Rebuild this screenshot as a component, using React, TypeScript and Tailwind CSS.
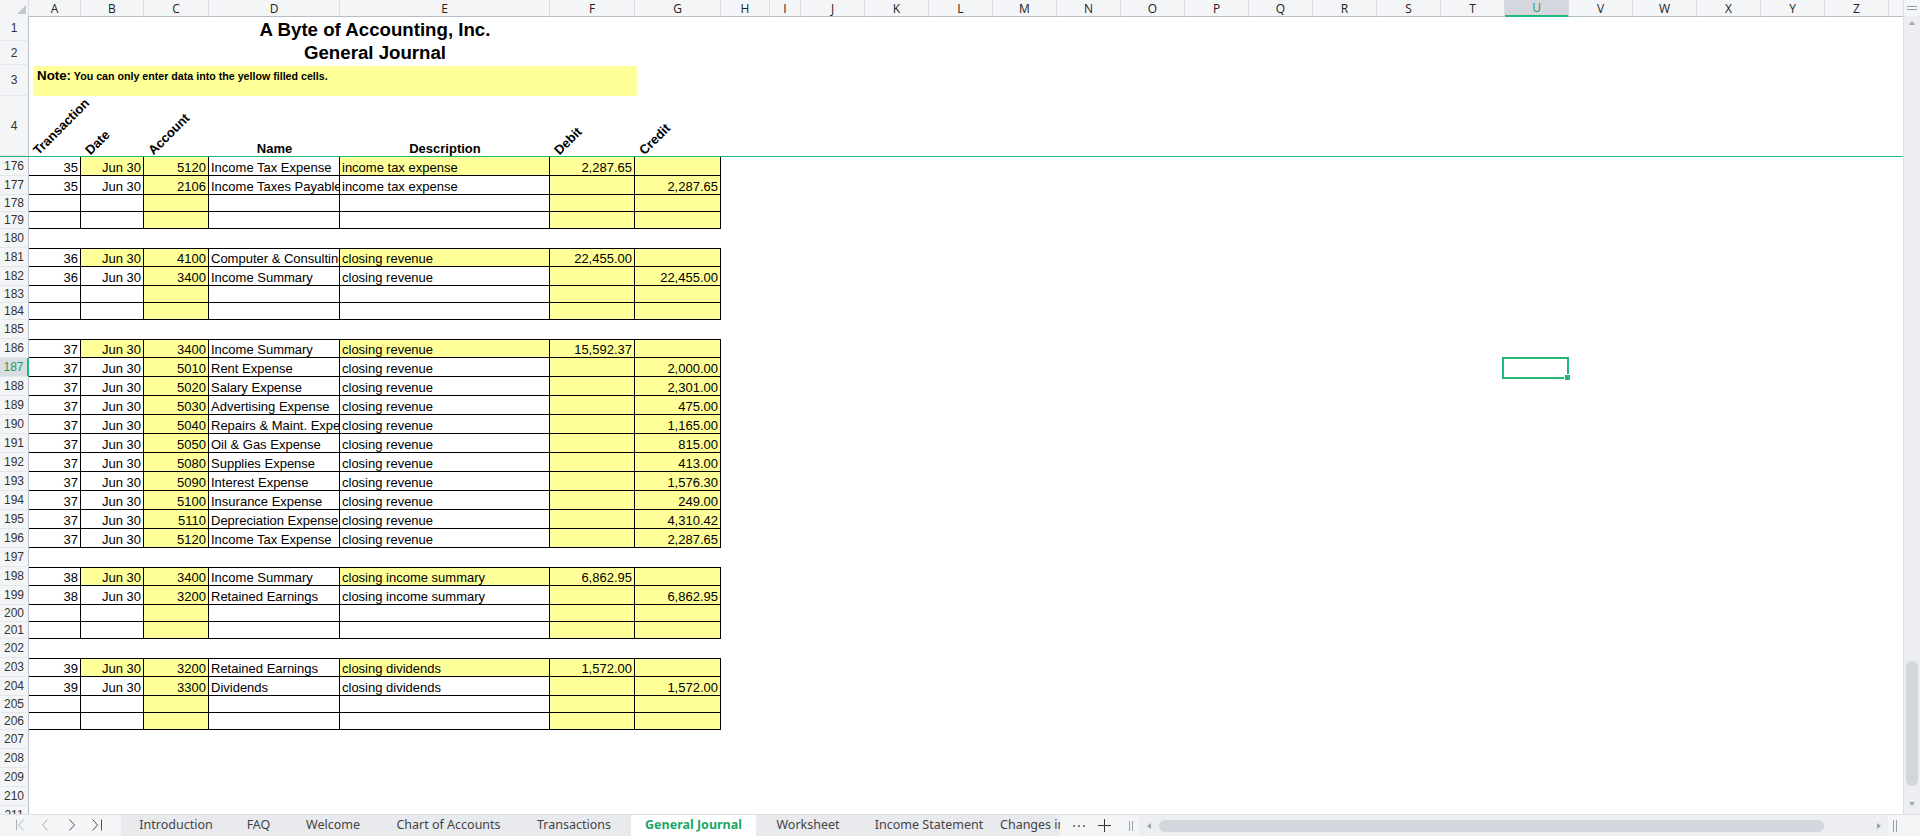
import React from 'react';

const GRID =
  'grid grid-cols-[29px_52px_63px_65px_131px_210px_85px_86px_49px_31px_repeat(17,64px)_1fr]';

const LETTERS = 'ABCDEFGHIJKLMNOPQRSTUVWXYZ'.split('');

// account, name, description, debit, credit
type Line = [string, string, string, string, string];

const BLOCKS: { t: string; lines: Line[]; empty: number }[] = [
  {
    t: '35',
    lines: [
      ['5120', 'Income Tax Expense', 'income tax expense', '2,287.65', ''],
      ['2106', 'Income Taxes Payable', 'income tax expense', '', '2,287.65'],
    ],
    empty: 2,
  },
  {
    t: '36',
    lines: [
      ['4100', 'Computer & Consulting Revenue', 'closing revenue', '22,455.00', ''],
      ['3400', 'Income Summary', 'closing revenue', '', '22,455.00'],
    ],
    empty: 2,
  },
  {
    t: '37',
    lines: [
      ['3400', 'Income Summary', 'closing revenue', '15,592.37', ''],
      ['5010', 'Rent Expense', 'closing revenue', '', '2,000.00'],
      ['5020', 'Salary Expense', 'closing revenue', '', '2,301.00'],
      ['5030', 'Advertising Expense', 'closing revenue', '', '475.00'],
      ['5040', 'Repairs & Maint. Expense', 'closing revenue', '', '1,165.00'],
      ['5050', 'Oil & Gas Expense', 'closing revenue', '', '815.00'],
      ['5080', 'Supplies Expense', 'closing revenue', '', '413.00'],
      ['5090', 'Interest Expense', 'closing revenue', '', '1,576.30'],
      ['5100', 'Insurance Expense', 'closing revenue', '', '249.00'],
      ['5110', 'Depreciation Expense', 'closing revenue', '', '4,310.42'],
      ['5120', 'Income Tax Expense', 'closing revenue', '', '2,287.65'],
    ],
    empty: 0,
  },
  {
    t: '38',
    lines: [
      ['3400', 'Income Summary', 'closing income summary', '6,862.95', ''],
      ['3200', 'Retained Earnings', 'closing income summary', '', '6,862.95'],
    ],
    empty: 2,
  },
  {
    t: '39',
    lines: [
      ['3200', 'Retained Earnings', 'closing dividends', '1,572.00', ''],
      ['3300', 'Dividends', 'closing dividends', '', '1,572.00'],
    ],
    empty: 2,
  },
];

type Row =
  | { n: number; kind: 'gap' }
  | { n: number; kind: 'line'; first: boolean; top: boolean; cells: string[] }
  | { n: number; kind: 'empty' };

function buildRows(): Row[] {
  const rows: Row[] = [];
  let n = 176;
  BLOCKS.forEach((b, bi) => {
    if (bi > 0) rows.push({ n: n++, kind: 'gap' });
    b.lines.forEach((l, li) => {
      rows.push({
        n: n++,
        kind: 'line',
        first: li === 0,
        top: bi > 0 && li === 0,
        cells: [b.t, 'Jun 30', l[0], l[1], l[2], l[3], l[4]],
      });
    });
    for (let i = 0; i < b.empty; i++) rows.push({ n: n++, kind: 'empty' });
  });
  while (n <= 211) rows.push({ n: n++, kind: 'gap' });
  return rows;
}

const RIGHT = [true, true, true, false, false, true, true];

function RowHead({ n, sel }: { n: number; sel?: boolean }) {
  return (
    <div
      className={
        sel
          ? 'flex items-center justify-center border-b border-r-2 border-b-[#e3e6ea] border-r-[#21b877] bg-[#dadde2] text-[12px] leading-[14px] text-[#1a9f62]'
          : 'flex items-center justify-center border-b border-r border-b-[#e3e6ea] border-r-[#b9c0cc] bg-[#f4f5f7] text-[12px] leading-[14px] text-[#333]'
      }
    >
      {n}
    </div>
  );
}

function Cell({ text, col, yellow, top }: { text: string; col: number; yellow: boolean; top: boolean }) {
  return (
    <div
      className={`flex items-end overflow-hidden whitespace-nowrap border-r border-b border-black px-[2px] leading-[14px] ${
        top ? 'border-t' : ''
      } ${RIGHT[col] ? 'justify-end' : ''} ${yellow ? 'bg-[#ffff99]' : ''}`}
    >
      {text}
    </div>
  );
}

function Filler({ n }: { n: number }) {
  if (n !== 187) return <div className="col-span-20" />;
  return (
    <>
      <div className="col-span-13" />
      <div className="relative">
        <div className="absolute -top-[1px] -bottom-[2px] -left-[3px] right-0 z-10 border-2 border-[#21b877]" />
        <div className="absolute -right-[2px] -bottom-[4px] z-10 h-[7px] w-[7px] border border-white bg-[#21b877]" />
      </div>
      <div className="col-span-6" />
    </>
  );
}

function DataRow({ r }: { r: Row }) {
  const h = r.kind === 'empty' ? 'h-[17px]' : 'h-[19px]';
  return (
    <div className={`${GRID} ${h}`}>
      <RowHead n={r.n} sel={r.n === 187} />
      {r.kind === 'gap' ? (
        <div className="col-span-7" />
      ) : (
        [0, 1, 2, 3, 4, 5, 6].map((c) => {
          const first = r.kind === 'line' && r.first;
          const yellow = c === 2 || c === 5 || c === 6 || (first && (c === 1 || c === 4));
          return (
            <Cell
              key={c}
              col={c}
              text={r.kind === 'line' ? r.cells[c] : ''}
              yellow={yellow}
              top={r.kind === 'line' && r.top}
            />
          );
        })
      )}
      <Filler n={r.n} />
    </div>
  );
}

function Slant({ text }: { text: string }) {
  return (
    <div className="flex items-end pl-[11px]">
      <span className="-mb-[1px] origin-bottom-left -rotate-45 whitespace-nowrap text-[13px] font-bold leading-[13px]">
        {text}
      </span>
    </div>
  );
}

function ColumnHeader() {
  return (
    <div className={`${GRID} h-[16px] font-['Open_Sans',sans-serif] text-[12px] leading-[15px] text-[#222]`}>
      <div className="flex items-end justify-end border-r border-b border-r-[#d9dce2] border-b-[#b6bdc9] bg-[#f4f5f7] pr-[2px] pb-[2px]">
        <svg width="9" height="9" viewBox="0 0 9 9">
          <polygon points="9,0 9,9 0,9" fill="#c3c7ce" />
        </svg>
      </div>
      {LETTERS.map((l) =>
        l === 'U' ? (
          <div
            key={l}
            className="flex items-center justify-center border-r border-b-2 border-r-[#d9dce2] border-b-[#21b877] bg-[#d5d8de] text-[#1a9f62]"
          >
            {l}
          </div>
        ) : (
          <div
            key={l}
            className="flex items-center justify-center border-r border-b border-r-[#d9dce2] border-b-[#b6bdc9] bg-[#f4f5f7]"
          >
            {l}
          </div>
        )
      )}
      <div className="border-b border-[#b6bdc9] bg-[#f4f5f7]" />
    </div>
  );
}

function VScroll() {
  return (
    <div className="flex w-[17px] flex-col border-l border-[#dcdfe4] bg-[#eceef2]">
      <div className="flex h-[16px] flex-col items-center justify-center gap-[2px] bg-[#f4f5f7]">
        <div className="h-px w-[10px] bg-[#8d939c]" />
        <div className="h-px w-[10px] bg-[#8d939c]" />
      </div>
      <div className="flex h-[14px] items-center justify-center">
        <svg width="6" height="4" viewBox="0 0 6 4">
          <polygon points="3,0 6,4 0,4" fill="#a3a8b0" />
        </svg>
      </div>
      <div className="flex-1" />
      <div className="mx-auto h-[125px] w-[12px] rounded-full bg-[#d3d6dc]" />
      <div className="flex h-[28px] items-end justify-center pb-[8px]">
        <svg width="6" height="4" viewBox="0 0 6 4">
          <polygon points="0,0 6,0 3,4" fill="#a3a8b0" />
        </svg>
      </div>
    </div>
  );
}

const TABS: { name: string; w: string; active?: boolean }[] = [
  { name: 'Introduction', w: 'w-[110px]' },
  { name: 'FAQ', w: 'w-[55px]' },
  { name: 'Welcome', w: 'w-[94px]' },
  { name: 'Chart of Accounts', w: 'w-[137px]' },
  { name: 'Transactions', w: 'w-[114px]' },
  { name: 'General Journal', w: 'w-[125px]', active: true },
  { name: 'Worksheet', w: 'w-[104px]' },
  { name: 'Income Statement', w: 'w-[138px]' },
];

function TabBar() {
  return (
    <div className="flex h-[22px] border-t border-[#dcdfe4] bg-[#f4f5f7] font-['Noto_Sans',sans-serif] text-[12.5px] text-[#444]">
      {/* sheet navigation */}
      <div className="w-[121px]">
        <svg width="121" height="21" viewBox="0 0 121 21" fill="none" strokeWidth="1">
          <path d="M16.5 4.5v11M23.5 4.5 18.5 10l5 5.5" stroke="#a9adb4" />
          <path d="M47.5 4.5 42.5 10l5 5.5" stroke="#a9adb4" />
          <path d="M69.5 4.5 74.5 10l-5 5.5" stroke="#4b4f56" />
          <path d="M92.5 4.5 97.5 10l-5 5.5M101.5 4.5v11" stroke="#4b4f56" />
        </svg>
      </div>
      <div className="flex w-[939px] overflow-hidden bg-[#e8eaee]">
        {TABS.map((t) =>
          t.active ? (
            <div key={t.name} className={`${t.w} flex shrink-0 items-center justify-center bg-white font-bold text-[#1aa566]`}>
              {t.name}
            </div>
          ) : (
            <div key={t.name} className={`${t.w} flex shrink-0 items-center justify-center whitespace-nowrap`}>
              {t.name}
            </div>
          )
        )}
        <div className="flex shrink-0 items-center whitespace-nowrap pl-[2px]">Changes in Equity</div>
      </div>
      <div className="flex w-[79px] items-center pl-[8px]">
        <div className="flex w-[22px] justify-center">
          <svg width="14" height="4" viewBox="0 0 14 4">
            <circle cx="2" cy="2" r="1" fill="#555" />
            <circle cx="7" cy="2" r="1" fill="#555" />
            <circle cx="12" cy="2" r="1" fill="#555" />
          </svg>
        </div>
        <div className="ml-[4px] flex w-[20px] justify-center">
          <svg width="13" height="13" viewBox="0 0 13 13">
            <path d="M6.5 0v13M0 6.5h13" stroke="#333" strokeWidth="1" />
          </svg>
        </div>
        <div className="ml-[12px] flex w-[10px] justify-center">
          <svg width="4" height="10" viewBox="0 0 4 10">
            <path d="M0.5 0v10M3.5 0v10" stroke="#9a9fa7" strokeWidth="1" />
          </svg>
        </div>
      </div>
      <div className="flex w-[749px] items-center bg-[#eceef2]">
        <div className="flex w-[20px] justify-center">
          <svg width="4" height="6" viewBox="0 0 4 6">
            <polygon points="4,0 4,6 0,3" fill="#9aa0a8" />
          </svg>
        </div>
        <div className="h-[12px] w-[665px] rounded-full bg-[#d3d6dc]" />
        <div className="flex w-[64px] justify-end pr-[7px]">
          <svg width="4" height="6" viewBox="0 0 4 6">
            <polygon points="0,0 4,3 0,6" fill="#9aa0a8" />
          </svg>
        </div>
      </div>
      <div className="flex flex-1 items-center pl-[5px]">
        <svg width="4" height="12" viewBox="0 0 4 12">
          <path d="M0.5 0v12M3.5 0v12" stroke="#9a9fa7" strokeWidth="1" />
        </svg>
      </div>
    </div>
  );
}

export default function App() {
  const rows = buildRows();
  return (
    <div className="flex h-[836px] w-[1920px] flex-col overflow-hidden bg-white font-['Liberation_Sans',Arial,sans-serif] text-[13px] text-black">
      <div className="flex h-[814px]">
        <div className="w-[1903px] overflow-hidden">
          <ColumnHeader />

          <div className={`${GRID} h-[25px]`}>
            <RowHead n={1} />
            <div className="col-span-7 flex items-end justify-center text-[18.67px] font-bold leading-[22px]">
              A Byte of Accounting, Inc.
            </div>
            <div className="col-span-20" />
          </div>

          <div className={`${GRID} h-[24px]`}>
            <RowHead n={2} />
            <div className="col-span-7 flex items-end justify-center pb-[1px] text-[18.67px] font-bold leading-[22px]">
              General Journal
            </div>
            <div className="col-span-20" />
          </div>

          <div className={`${GRID} h-[31px]`}>
            <RowHead n={3} />
            <div className="col-span-7 pt-[1px] pl-[4px]">
              <div className="h-full w-[604px] bg-[#ffff99] pt-[2px] pl-[4px] font-bold leading-[16px]">
                <span className="text-[13.33px]">Note:</span>
                <span className="text-[10.67px]">{' '}You can only enter data into the yellow filled cells.</span>
              </div>
            </div>
            <div className="col-span-20" />
          </div>

          <div className={`${GRID} h-[60px]`}>
            <RowHead n={4} />
            <Slant text="Transaction" />
            <Slant text="Date" />
            <Slant text="Account" />
            <div className="flex items-end justify-center text-[13px] font-bold leading-[15px]">Name</div>
            <div className="flex items-end justify-center text-[13px] font-bold leading-[15px]">Description</div>
            <Slant text="Debit" />
            <Slant text="Credit" />
            <div className="col-span-20" />
          </div>
          <div className="h-px bg-[#21b877]" />

          {rows.map((r) => (
            <DataRow key={r.n} r={r} />
          ))}
        </div>
        <VScroll />
      </div>
      <TabBar />
    </div>
  );
}
